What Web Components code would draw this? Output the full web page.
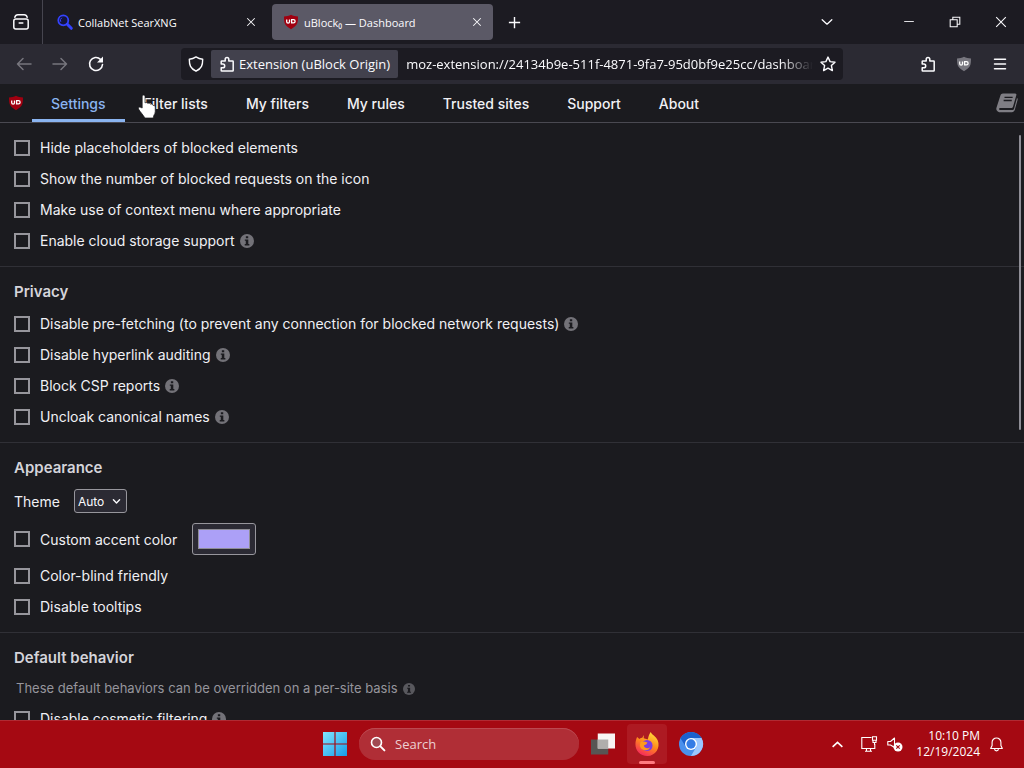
<!DOCTYPE html>
<html lang="en">
<head>
<meta charset="utf-8">
<title>uBlock₀ — Dashboard</title>
<style>
  html, body {
    height: 100%;
    margin: 0;
    overflow: hidden;
  }
</style>
</head>
<body>
<desktop-screen></desktop-screen>
<script>
/**
 * Creates a template element from a markup string.
 */
const createTemplate = html => {
  const template = document.createElement('template')
  template.innerHTML = html
  return template
}

/**
 * Registers a custom element that only renders its template.
 */
const define = (name, html) => {
  const template = createTemplate(html)
  customElements.define(name, class extends HTMLElement {
    constructor () {
      super()
      this.attachShadow({ mode: 'open' }).appendChild(template.content.cloneNode(true))
    }
  })
}

/*
 * Icons, drawn as inline SVG.
 */
const shield = (fill, text) => `
  <path fill="${fill}" d="M8 .8C6 2 3.500 2.500 1 2.500c0 6.500.5 9 7 12.700 6.500-3.700 7-6.200 7-12.700-2.500 0-5-.5-7-1.700z"/>
  <path fill="none" stroke="${text}" stroke-width="1.300" d="M3.700 5.500v2.200a1.400 1.400 0 0 0 2.800 0V5.500M8 5.600h2.500a1.600 1.600 0 0 1 0 3.200H8.600V6"/>`

const icons = {
  'firefox-view': '<g fill="none" stroke="#fbfbfe" stroke-width="1.500" stroke-linecap="round" stroke-linejoin="round"><path d="M1.800 3.200C2.300 1.600 3.300.8 4.800.8h6.400c1.500 0 2.500.8 3 2.400"/><rect x=".8" y="5" width="14.400" height="10" rx="2"/><path d="M6.200 9h3.600"/></g>',
  search: '<circle cx="6.300" cy="6.300" r="5" fill="#14143c" stroke="#3443ff" stroke-width="1.800"/><path d="M3.800 7.800a3 3 0 0 1 1-4" fill="none" stroke="#3443ff"/><path d="M10.300 10.300l4 4" stroke="#3443ff" stroke-width="3" stroke-linecap="round"/>',
  ublock: shield('#a00010', '#fff'),
  'ublock-off': shield('#77767e', '#fff'),
  close: '<path fill="none" stroke="#fbfbfe" stroke-width="1.400" d="M3 3l10 10m0-10l-10 10"/>',
  exit: '<path fill="none" stroke="#fbfbfe" stroke-width="1.200" d="M2.500 2.500l11 11m0-11l-11 11"/>',
  plus: '<path fill="none" stroke="#fbfbfe" stroke-width="1.500" d="M8 2v12M2 8h12"/>',
  down: '<path fill="none" stroke="#fbfbfe" stroke-width="1.500" stroke-linecap="round" stroke-linejoin="round" d="M2.500 5.500L8 10.500l5.500-5"/>',
  'select-down': '<path fill="none" stroke="#fbfbfe" stroke-width="2.500" stroke-linecap="round" stroke-linejoin="round" d="M2.500 5L8 10.500 13.500 5"/>',
  up: '<path fill="none" stroke="#fff" stroke-width="2" d="M2 11l6-5.500 6 5.500"/>',
  minimize: '<path fill="#fbfbfe" d="M2.500 7h11v1h-11z"/>',
  restore: '<path fill="none" stroke="#fbfbfe" stroke-width="1.200" d="M2.500 5.500h8v8h-8zM5.500 5.500v-3h8v8h-3"/>',
  back: '<path fill="none" stroke="#77767e" stroke-width="1.500" stroke-linecap="round" stroke-linejoin="round" d="M15 8H1.500M7 2.500L1.500 8 7 13.500"/>',
  forward: '<path fill="none" stroke="#77767e" stroke-width="1.500" stroke-linecap="round" stroke-linejoin="round" d="M1 8h13.500M9 2.500L14.500 8 9 13.500"/>',
  reload: '<path fill="none" stroke="#fbfbfe" stroke-width="1.600" stroke-linecap="round" d="M14.500 8.500A6.500 6.500 0 1 1 12.500 3.300"/><path fill="#fbfbfe" d="M15 .5V6.500H9z"/>',
  shield: '<path fill="none" stroke="#fbfbfe" stroke-width="1.400" stroke-linejoin="round" d="M8 .9C6 2.200 3.700 3 1.300 3.200c0 6 1 9 6.700 12 5.700-3 6.700-6 6.700-12C12.300 3 10 2.200 8 .9z"/>',
  puzzle: '<path fill="none" stroke="#fbfbfe" stroke-width="1.500" stroke-linejoin="round" d="M2.200 7.800V5.600c0-.4.2-.6.600-.6h3.400V3.200a1.800 1.800 0 0 1 3.600 0V5h3.800c.4 0 .6.200.6.600v8.800c0 .4-.2.6-.6.600H2.800c-.4 0-.6-.2-.6-.6v-2.600h1.600a1.900 1.900 0 0 0 0-3.800H2.200z"/>',
  star: '<path fill="none" stroke="#fbfbfe" stroke-width="1.400" stroke-linejoin="round" d="M8 1.100l2.100 4.500 4.900.6-3.600 3.400 1 5L8 12.100l-4.400 2.500 1-5L1 6.200l4.900-.6z"/>',
  menu: '<path fill="none" stroke="#fbfbfe" stroke-width="1.500" stroke-linecap="round" d="M2.500 3.200h11M2.500 8h11M2.500 12.800h11"/>',
  book: '<g transform="translate(-1 -1)"><path fill="#7f7e84" d="M6.500 1.300h9.800c.8 0 1.200.6 1 1.300l-2.700 9.300c-.2.700-.8 1.100-1.500 1.100H4.300c-1 0-1.300 1.500-.2 1.500h9.700c.9 0 1.500-.4 1.700-1.200l2.300-8.300.4.300c.2.300.2.700.1 1l-2.300 8.300c-.3 1-1.200 1.700-2.300 1.700H3.500C2 16 .8 14.400 1.300 13L4.600 2.800c.3-.9 1-1.500 1.900-1.500z"/><path stroke="#1b1b1f" stroke-width="1.100" d="M7.800 4.500h6.500M7.100 7h6.500"/></g>',
  info: '<circle cx="8" cy="8" r="8" fill="#737278"/><path fill="#1b1b1f" d="M6.700 2.500h2.700v2.300H6.700zM5.500 6.200h4v5.300h1.200V13H5.400v-1.500h1.200V7.700H5.500z"/>',
  windows: '<defs><linearGradient id="w" x2="1" y2="1"><stop stop-color="#82e6ff"/><stop offset="1" stop-color="#159be8"/></linearGradient></defs><path fill="url(#w)" d="M0 0h7.600v7.600H0zM8.400 0H16v7.600H8.400zM0 8.400h7.600V16H0zM8.400 8.400H16V16H8.400z"/>',
  find: '<circle cx="6.500" cy="6.500" r="5" fill="#a14a52" stroke="#fff" stroke-width="1.600"/><path stroke="#fff" stroke-width="2" stroke-linecap="round" d="M10.400 10.400l4 4"/>',
  tasks: '<path fill="#575553" d="M0 5h11.500v10H0z"/><path fill="#f8f4f3" d="M4.500 1H16v10H4.500z"/><path fill="#b0aeac" d="M4.500 5h7v6h-7z"/>',
  firefox: '<defs><linearGradient id="f" x1=".8" y1="0" x2=".3" y2="1"><stop stop-color="#ffe23c"/><stop offset=".5" stop-color="#ff8a1c"/><stop offset="1" stop-color="#f5245f"/></linearGradient></defs><path fill="url(#f)" d="M1.400 3.400l1.500 1.200c.6-.5 1.400-.8 2-.8L5.800 2v2.200L8.500 5C9 3 9.500 1.300 10.500 0c.7 2 3.300 2.400 4.600 5.500C17.200 10.600 13.600 16 8.200 16 3.500 16 .2 12.400.3 8.200c0-2 .5-3.400 1.100-4.800z"/><circle cx="8" cy="9" r="3.700" fill="#7d3ce0"/><path fill="#ff9a1d" d="M3.700 6.600c1.500-.6 3-.3 4.600.4L7.600 8.200 5.900 9c.3 2 2.900 2.200 4.200 1.200-1 3.200-6.400 2.400-6.900-1.200z"/>',
  chromium: '<circle cx="8" cy="8" r="8" fill="#4a90ec"/><path fill="#1c61ce" d="M1 4.200A8 8 0 0 1 15 4H8L4.600 10z"/><path fill="#9bc7ff" d="M8 16a8 8 0 0 0 7-12H8l3.500 6z"/><circle cx="8" cy="8" r="4" fill="#fff"/><circle cx="8" cy="8" r="3.100" fill="#347ce5"/>',
  network: '<path fill="none" stroke="#fff" stroke-width="1.100" d="M10.500 1.500H.8v11h13V8M4 15.200h7M5.500 12.500v2.500M9.500 12.500v2.500M11.500.8h4v3.500h-4zM12 4.300v2.200h3V4.300M13.500 6.500V9"/>',
  sound: '<path fill="none" stroke="#fff" stroke-width="1.100" stroke-linejoin="round" d="M.8 5.500h2.700L7.500 2v9.500L3.500 9H.8z"/><circle cx="11" cy="11" r="4.500" fill="#fff"/><path stroke="#a50912" stroke-width="1.100" d="M9.300 9.300l3.400 3.400m0-3.400l-3.400 3.400"/>',
  bell: '<path fill="none" stroke="#fff" stroke-width="1.200" stroke-linejoin="round" d="M1.800 12.300L3.300 9V5.700a4.700 4.700 0 0 1 9.400 0V9l1.500 3.300zM6 12.800a2 2 0 0 0 4 0"/>',
  hand: '<path fill="#fff" stroke="#17171b" stroke-width=".5" d="M4.300 9V1.300C4.300.5 4.800 0 5.300 0s1 .5 1 1.300v4.200c.7-.5 1.600-.2 1.900.4.700-.4 1.600-.2 1.900.5.700-.3 1.700 0 1.800.9.800-.2 1.500.3 1.500 1.100v3c0 1.200-.5 2-1 2.800L12 16H6.200C4.800 13.500 3 12 1.800 9.800c-.5-.9.500-1.800 1.300-1.200z"/>'
}

/**
 * <ui-icon name="close"> draws one of the icons above.
 */
customElements.define('ui-icon',
  class extends HTMLElement {
    constructor () {
      super()
      this.attachShadow({ mode: 'open' })
    }

    connectedCallback () {
      this.shadowRoot.innerHTML = `
        <style>
          :host {
            display: block;
            flex: none;
            width: 16px;
            height: 16px;
          }
          svg {
            display: block;
            width: 100%;
            height: 100%;
            overflow: visible;
          }
        </style>
        <svg viewBox="0 0 16 16" aria-hidden="true">${icons[this.getAttribute('name')]}</svg>
      `
    }
  }
)

/**
 * <icon-button icon="menu" label="Menu">
 */
customElements.define('icon-button',
  class extends HTMLElement {
    constructor () {
      super()
      this.attachShadow({ mode: 'open' })
    }

    connectedCallback () {
      this.shadowRoot.innerHTML = `
        <style>
          :host {
            display: block;
            flex: none;
            width: 32px;
            height: 32px;
          }
          button {
            display: grid;
            place-items: center;
            width: 100%;
            height: 100%;
            padding: 0;
            border: none;
            background: none;
            cursor: pointer;
          }
          ui-icon {
            width: var(--icon-size, 16px);
            height: var(--icon-size, 16px);
          }
        </style>
        <button type="button" aria-label="${this.getAttribute('label')}">
          <ui-icon name="${this.getAttribute('icon')}"></ui-icon>
        </button>
      `
    }
  }
)

define('browser-tab', `
  <style>
    :host {
      display: flex;
      align-items: center;
      box-sizing: border-box;
      width: 221px;
      height: 36px;
      padding: 0 0 0 11px;
      border-radius: 4px;
      color: #fbfbfe;
      font-size: 11px;
    }
    :host([selected]) {
      background: #5b5966;
    }
    span {
      flex: 1;
      margin-left: 5px;
      white-space: nowrap;
    }
    icon-button {
      --icon-size: 12px;
    }
  </style>
  <slot name="icon"></slot>
  <span><slot></slot></span>
  <icon-button icon="close" label="Close tab"></icon-button>
`)

define('tab-bar', `
  <style>
    :host {
      display: flex;
      align-items: center;
      height: 44px;
      background: #1c1b22;
    }
    .view {
      display: grid;
      place-items: center;
      align-self: stretch;
      width: 42px;
      margin-right: 3px;
      border-right: 1px solid #46454f;
    }
    browser-tab + browser-tab {
      margin-left: 5px;
    }
    .all {
      margin-left: auto;
      margin-right: 43px;
      --icon-size: 14px;
    }
    .window {
      display: flex;
    }
    .window icon-button {
      width: 46px;
      --icon-size: 14px;
    }
    .new {
      margin-left: 5px;
      --icon-size: 15px;
    }
  </style>
  <div class="view"><icon-button icon="firefox-view" label="Firefox View"></icon-button></div>
  <browser-tab><ui-icon slot="icon" name="search"></ui-icon>CollabNet SearXNG</browser-tab>
  <browser-tab selected><ui-icon slot="icon" name="ublock"></ui-icon>uBlock₀ — Dashboard</browser-tab>
  <icon-button class="new" icon="plus" label="New tab"></icon-button>
  <icon-button class="all" icon="down" label="List all tabs"></icon-button>
  <div class="window">
    <icon-button icon="minimize" label="Minimize"></icon-button>
    <icon-button icon="restore" label="Restore"></icon-button>
    <icon-button icon="exit" label="Close"></icon-button>
  </div>
`)

define('nav-toolbar', `
  <style>
    :host {
      display: flex;
      align-items: center;
      box-sizing: border-box;
      height: 40px;
      padding: 0 8px;
      background: #2b2a33;
      color: #fbfbfe;
      font-size: 13px;
    }
    .history {
      display: flex;
      flex: 1 1 173px;
      gap: 4px;
    }
    .address {
      display: flex;
      flex: 1 1 662px;
      align-items: center;
      min-width: 0;
      height: 32px;
      border-radius: 4px;
      background: #1c1b22;
    }
    .address icon-button {
      width: 30px;
    }
    .identity {
      display: flex;
      flex: none;
      align-items: center;
      gap: 4px;
      height: 28px;
      padding: 0 8px;
      border: none;
      border-radius: 2px;
      background: #42414d;
      color: inherit;
      font: inherit;
    }
    input {
      flex: 1;
      min-width: 0;
      margin-left: 8px;
      padding: 0;
      border: none;
      outline: none;
      background: none;
      color: inherit;
      font: inherit;
      -webkit-mask-image: linear-gradient(to left, transparent, #000 32px);
      mask-image: linear-gradient(to left, transparent, #000 32px);
    }
    .tools {
      display: flex;
      flex: 1 1 173px;
      justify-content: flex-end;
      gap: 4px;
    }
  </style>
  <div class="history">
    <icon-button icon="back" label="Back"></icon-button>
    <icon-button icon="forward" label="Forward"></icon-button>
    <icon-button icon="reload" label="Reload"></icon-button>
  </div>
  <div class="address">
    <icon-button icon="shield" label="Tracking protection"></icon-button>
    <button class="identity" type="button"><ui-icon name="puzzle"></ui-icon>Extension (uBlock Origin)</button>
    <input aria-label="Address" value="moz-extension://24134b9e-511f-4871-9fa7-95d0bf9e25cc/dashboard.html">
    <icon-button icon="star" label="Bookmark this page"></icon-button>
  </div>
  <div class="tools">
    <icon-button icon="puzzle" label="Extensions"></icon-button>
    <icon-button icon="ublock-off" label="uBlock Origin"></icon-button>
    <icon-button icon="menu" label="Menu"></icon-button>
  </div>
`)

define('dashboard-nav', `
  <style>
    :host {
      display: flex;
      align-items: center;
      box-sizing: border-box;
      height: 39px;
      padding: 0 8px;
      border-bottom: 1px solid #4a4951;
    }
    nav {
      display: flex;
      flex: 1;
      align-self: stretch;
      margin-left: 8px;
    }
    a {
      display: flex;
      align-items: center;
      padding: 0 19px;
      border-top: 3px solid transparent;
      border-bottom: 3px solid transparent;
      color: #f0f0f4;
      font-size: 14px;
      font-weight: 500;
      text-decoration: none;
    }
    a[aria-current] {
      border-bottom-color: #8ab4f0;
      color: #8ab4f0;
    }
    .book {
      width: 20px;
      height: 20px;
    }
  </style>
  <ui-icon name="ublock"></ui-icon>
  <nav>
    <a href="#settings" aria-current="page">Settings</a>
    <a href="#lists">Filter lists</a>
    <a href="#filters">My filters</a>
    <a href="#rules">My rules</a>
    <a href="#trusted">Trusted sites</a>
    <a href="#support">Support</a>
    <a href="#about">About</a>
  </nav>
  <ui-icon class="book" name="book"></ui-icon>
`)

/*
 * A group of settings below an optional heading.
 */
define('settings-section', `
  <style>
    :host {
      display: block;
      padding: 9px 14px 10px;
      border-bottom: 1px solid #303036;
    }
    ::slotted(h2) {
      margin: 0 0 1px;
      color: #d4d4da;
      font-size: 15px;
      font-weight: 600;
      line-height: 31px;
    }
  </style>
  <slot></slot>
`)

/**
 * <setting-check info>Label</setting-check>
 */
customElements.define('setting-check',
  class extends HTMLElement {
    constructor () {
      super()
      this.attachShadow({ mode: 'open' })
    }

    connectedCallback () {
      this.shadowRoot.innerHTML = `
        <style>
          :host {
            display: flex;
            align-items: center;
            min-height: 31px;
          }
          input {
            appearance: none;
            box-sizing: border-box;
            flex: none;
            width: 16px;
            height: 16px;
            margin: 0 10px 0 0;
            border: 2px solid #97969c;
          }
          ui-icon {
            width: 14px;
            height: 14px;
            margin-left: 5px;
          }
        </style>
        <input type="checkbox" id="box">
        <label for="box"><slot></slot></label>
        ${this.hasAttribute('info') ? '<ui-icon name="info"></ui-icon>' : ''}
        <slot name="control"></slot>
      `
    }
  }
)

define('theme-select', `
  <style>
    :host {
      display: flex;
      align-items: center;
      gap: 14px;
      height: 34px;
    }
    div {
      display: grid;
      align-items: center;
    }
    select, ui-icon {
      grid-area: 1 / 1;
    }
    select {
      appearance: none;
      width: 53px;
      height: 24px;
      padding: 0 3px;
      border: 1px solid #97969c;
      border-radius: 3px;
      background: #2b2a33;
      color: #fbfbfe;
      font: inherit;
      font-size: 12px;
    }
    ui-icon {
      justify-self: end;
      width: 9px;
      height: 9px;
      margin-right: 6px;
      pointer-events: none;
    }
  </style>
  <label for="theme">Theme</label>
  <div>
    <select id="theme"><option>Auto</option></select>
    <ui-icon name="select-down"></ui-icon>
  </div>
`)

define('color-picker', `
  <style>
    :host {
      display: block;
      margin-left: 15px;
      padding: 5px 0;
    }
    input {
      display: block;
      box-sizing: border-box;
      width: 64px;
      height: 32px;
      padding: 5px;
      border: 1px solid #97969c;
      border-radius: 3px;
      background: #2b2a33;
    }
    input::-webkit-color-swatch-wrapper {
      padding: 0;
    }
    input::-webkit-color-swatch {
      border: 1px solid #8f8e96;
      border-radius: 0;
    }
  </style>
  <input type="color" aria-label="Accent color" value="#aca0f7">
`)

define('settings-pane', `
  <style>
    :host {
      display: block;
      position: relative;
      min-height: 0;
      overflow: hidden;
      color: #f0f0f4;
      font-size: 14px;
    }
    p {
      display: flex;
      align-items: center;
      gap: 5px;
      margin: 0;
      padding: 0 2px;
      color: #96959c;
      font-size: 13px;
      line-height: 29px;
    }
    p ui-icon {
      width: 12px;
      height: 12px;
      opacity: 0.7;
    }
    .thumb {
      position: absolute;
      top: 12px;
      right: 3px;
      width: 2px;
      height: 295px;
      border-radius: 1px;
      background: #8f8e96;
    }
  </style>
  <settings-section>
    <setting-check>Hide placeholders of blocked elements</setting-check>
    <setting-check>Show the number of blocked requests on the icon</setting-check>
    <setting-check>Make use of context menu where appropriate</setting-check>
    <setting-check info>Enable cloud storage support</setting-check>
  </settings-section>
  <settings-section>
    <h2>Privacy</h2>
    <setting-check info>Disable pre-fetching (to prevent any connection for blocked network requests)</setting-check>
    <setting-check info>Disable hyperlink auditing</setting-check>
    <setting-check info>Block CSP reports</setting-check>
    <setting-check info>Uncloak canonical names</setting-check>
  </settings-section>
  <settings-section>
    <h2>Appearance</h2>
    <theme-select></theme-select>
    <setting-check>Custom accent color<color-picker slot="control"></color-picker></setting-check>
    <setting-check>Color-blind friendly</setting-check>
    <setting-check>Disable tooltips</setting-check>
  </settings-section>
  <settings-section>
    <h2>Default behavior</h2>
    <p>These default behaviors can be overridden on a per-site basis <ui-icon name="info"></ui-icon></p>
    <setting-check info>Disable cosmetic filtering</setting-check>
  </settings-section>
  <div class="thumb"></div>
`)

define('task-bar', `
  <style>
    :host {
      display: grid;
      grid-template-columns: 1fr auto 1fr;
      align-items: center;
      height: 48px;
      background: #a50912;
      box-shadow: inset 0 1px #b02a33;
      color: #fff;
      font-size: 12px;
    }
    .apps {
      display: flex;
      grid-column: 2;
      align-items: center;
      gap: 4px;
      padding-left: 2px;
    }
    .apps icon-button {
      width: 40px;
      height: 40px;
      --icon-size: 24px;
    }
    .search {
      display: flex;
      align-items: center;
      box-sizing: border-box;
      gap: 9px;
      width: 220px;
      height: 32px;
      padding: 0 11px;
      border-radius: 16px;
      background: #b02e36;
      box-shadow: inset 0 1px #bc4951;
      font-size: 13px;
    }
    .search input {
      flex: 1;
      min-width: 0;
      padding: 0;
      border: none;
      outline: none;
      background: none;
      color: inherit;
      font: inherit;
    }
    .search input::placeholder {
      color: #ecd0d2;
    }
    .running {
      display: grid;
      justify-items: center;
      border-radius: 4px;
      background: #ad1a22;
    }
    .running icon-button, .running::after {
      grid-area: 1 / 1;
    }
    .running::after {
      content: '';
      align-self: end;
      width: 16px;
      height: 3px;
      border-radius: 2px;
      background: #ff7a80;
    }
    .tray {
      display: flex;
      align-items: center;
      justify-self: end;
      margin-right: 12px;
    }
    .tray icon-button {
      width: 26px;
    }
    .tray .more {
      margin-right: 6px;
      --icon-size: 13px;
    }
    .tray .bell {
      width: 32px;
      --icon-size: 15px;
    }
    time {
      margin-left: 8px;
      line-height: 16px;
      text-align: right;
      white-space: nowrap;
    }
  </style>
  <div class="apps">
    <icon-button icon="windows" label="Start"></icon-button>
    <label class="search"><ui-icon name="find"></ui-icon><input type="search" placeholder="Search" aria-label="Search"></label>
    <icon-button icon="tasks" label="Task view"></icon-button>
    <div class="running"><icon-button icon="firefox" label="Firefox"></icon-button></div>
    <icon-button icon="chromium" label="Chromium"></icon-button>
  </div>
  <div class="tray">
    <icon-button class="more" icon="up" label="Show hidden icons"></icon-button>
    <icon-button icon="network" label="Network"></icon-button>
    <icon-button icon="sound" label="Volume muted"></icon-button>
    <time datetime="2024-12-19T22:10">10:10 PM<br>12/19/2024</time>
    <icon-button class="bell" icon="bell" label="Notifications"></icon-button>
  </div>
`)

define('desktop-screen', `
  <style>
    :host {
      display: grid;
      position: relative;
      grid-template-rows: auto auto auto 1fr auto;
      height: 100vh;
      background: #1b1b1f;
      font-family: 'Open Sans', 'Noto Sans', sans-serif;
    }
    dashboard-nav, settings-pane {
      font-family: Inter, sans-serif;
    }
    .pointer {
      position: absolute;
      top: 95px;
      left: 136px;
      width: 23px;
      height: 23px;
      pointer-events: none;
    }
  </style>
  <tab-bar></tab-bar>
  <nav-toolbar></nav-toolbar>
  <dashboard-nav></dashboard-nav>
  <settings-pane></settings-pane>
  <task-bar></task-bar>
  <ui-icon class="pointer" name="hand"></ui-icon>
`)
</script>
</body>
</html>
